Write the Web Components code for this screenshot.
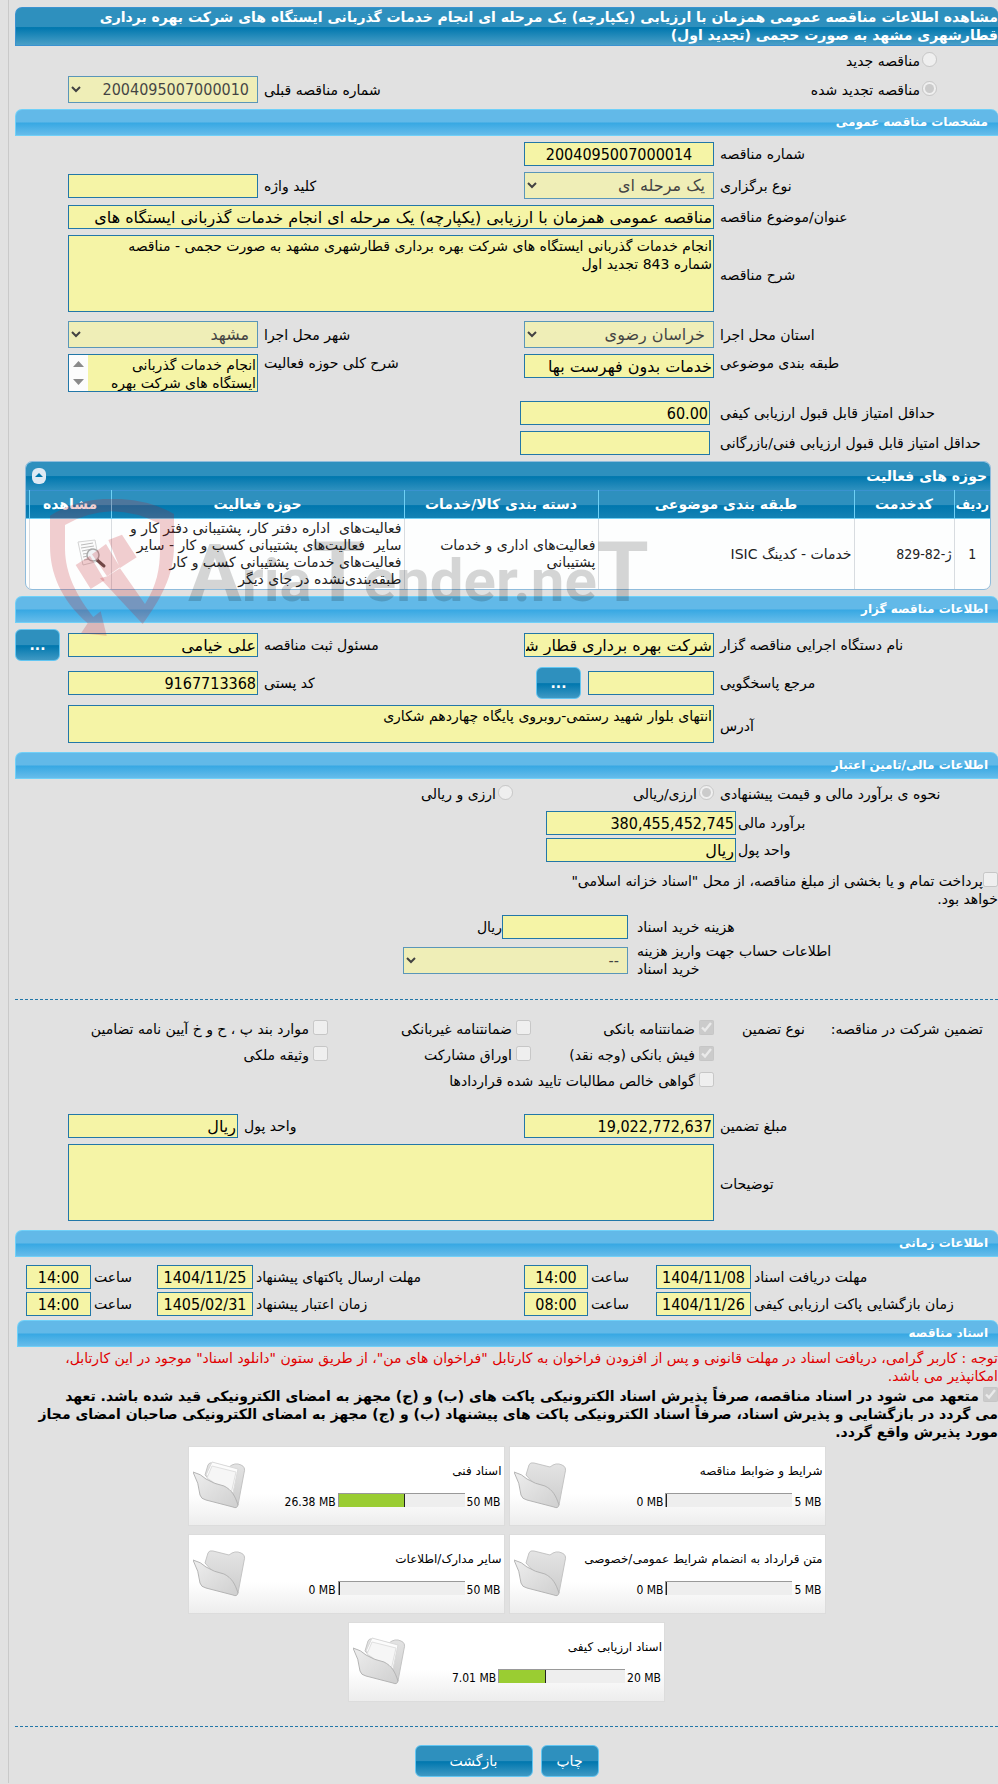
<!DOCTYPE html>
<html lang="fa" dir="rtl">
<head>
<meta charset="utf-8">
<title>مشاهده اطلاعات مناقصه عمومی</title>
<style>
  body {
    margin: 0;
    padding: 7px 0 6px 15px;
    background: linear-gradient(#c9c9c9, #c9c9c9) 8px 0 / 1px 100% no-repeat #e1e1e1;
    color: #000;
    font: 14px/18px "DejaVu Sans", sans-serif;
    overflow-x: hidden;
  }
</style>
</head>
<body>
<tender-page></tender-page>

<script>
class PageTitle extends HTMLElement {
  constructor() {
    super();
    this.attachShadow({ mode: 'open' });
    this.shadowRoot.innerHTML = `
      <style>
        :host { display: block; }
        h1 {
          margin: 0;
          padding: 0 0 1px;
          border: 1px solid #3a92d0;
          border-right: 0;
          border-radius: 7px 7px 0 0;
          background: linear-gradient(#2e90be 0 50%, #0077ae 53%, #4a9fc7);
          color: #fff;
          font-size: 14px;
          line-height: 18px;
        }
      </style>
      <h1><slot></slot></h1>
    `;
  }
}

class SectionBar extends HTMLElement {
  constructor() {
    super();
    this.attachShadow({ mode: 'open' });
    this.shadowRoot.innerHTML = `
      <style>
        :host { display: block; }
        h2 {
          margin: 0;
          padding: 0 10px;
          border: 1px solid #70d0f8;
          border-right: 0;
          border-radius: 7px 7px 0 0;
          background: linear-gradient(#62b9e8 0 48%, #37a8e3 52%, #66bcea);
          color: #fff;
          font-size: 12px;
          line-height: 25px;
        }
      </style>
      <h2><slot></slot></h2>
    `;
  }
}

// One line of the form. The fields inside hand their label and control to this grid.
class FormRow extends HTMLElement {
  constructor() {
    super();
    this.attachShadow({ mode: 'open' });
    this.shadowRoot.innerHTML = `
      <style>
        :host {
          display: grid;
          grid-template-columns: 278px 190px 1fr 190px 47px;
          column-gap: 6px;
          align-items: center;
        }
        :host([top]) { align-items: start; }
        :host([layout="estimate"]) {
          grid-template-columns: 260px 190px;
          column-gap: 2px;
        }
        :host([layout="amount"]) {
          grid-template-columns: 278px 190px 1fr 170px 47px;
        }
        :host([layout="fee"]) {
          grid-template-columns: 213px 225px;
          column-gap: 9px;
          padding-right: 148px;
        }
        :host([layout="time"]) {
          grid-template-columns: 244px 95px 62px 64px 1fr 96px 60px 65px;
          column-gap: 3px;
          padding-left: 11px;
        }
        ::slotted(tender-button) { justify-self: end; }
      </style>
      <slot></slot>
    `;
  }
}

class TenderField extends HTMLElement {
  connectedCallback() {
    const kind = this.getAttribute('kind') || 'input';
    const value = this.getAttribute('value') || '';
    this.attachShadow({ mode: 'open' });
    this.shadowRoot.innerHTML = `
      <style>
        :host { display: contents; }
        label { text-align: left; }
        .control {
          display: flex;
          align-items: center;
          gap: 7px;
          min-width: 0;
        }
        :host([inset]) .control { margin-right: 4px; margin-left: -4px; }
        :host([short]) .control { gap: 0; }
        :host([wide]) .control { grid-column: span 3; }
        :host([kind="textarea"]) .control { margin-bottom: 3px; }
        input, select, textarea {
          box-sizing: border-box;
          flex: 1;
          min-width: 0;
          height: 24px;
          margin: 0;
          padding: 1px;
          border: 1px solid #2277a8;
          border-radius: 0;
          outline: 0;
          background-color: #f5f4a6;
          color: #000;
          font-family: inherit;
          font-size: 16px;
        }
        .digits { font-family: "DejaVu Sans Condensed", "DejaVu Sans", sans-serif; }
        select { height: 27px; padding: 0 4px; }
        textarea {
          height: 38px;
          font-size: 14px;
          line-height: 18px;
          resize: none;
          overflow: hidden;
        }
        :host([tall]) textarea { height: 77px; }
        :host([center]) input { text-align: center; }
        :host([short]) input, :host([after]) input { flex: 0 0 126px; }
        :host([scroll]) .control { border: 1px solid #2277a8; gap: 0; box-sizing: border-box; }
        :host([scroll]) textarea { border: 0; height: 36px; }
        .scroll {
          display: flex;
          flex-direction: column;
          justify-content: space-between;
          box-sizing: border-box;
          width: 19px;
          height: 36px;
          padding: 6px 4px;
          background: #fcfcfc;
        }
        .scroll svg { display: block; width: 11px; height: 6px; fill: #8a8a8a; }
      </style>
      <label for="control"></label>
      <div class="control"></div>
    `;
    this.shadowRoot.querySelector('label').textContent = this.getAttribute('label');
    const box = this.shadowRoot.querySelector('.control');
    const control = document.createElement(kind);
    control.id = 'control';
    if (/^[\d.,:\/-]+$/.test(value)) {
      control.className = 'digits';
    }
    if (kind === 'select') {
      control.add(new Option(value));
      control.disabled = true;
    } else {
      control.value = value;
      control.readOnly = true;
    }
    box.appendChild(control);
    if (this.hasAttribute('scroll')) {
      box.insertAdjacentHTML('beforeend', `
        <span class="scroll">
          <svg viewBox="0 0 11 6"><path d="M0 6 5.500 0 11 6z"/></svg>
          <svg viewBox="0 0 11 6"><path d="M0 0 5.500 6 11 0z"/></svg>
        </span>`);
    }
    box.appendChild(document.createElement('slot'));
  }
}

class TenderChoice extends HTMLElement {
  connectedCallback() {
    this.attachShadow({ mode: 'open' });
    this.shadowRoot.innerHTML = `
      <style>
        :host { display: block; }
        input {
          width: 15px;
          height: 15px;
          margin: 0;
          vertical-align: -1px;
        }
        :host([gap]) input { margin-left: 4px; }
        :host([radio]) input { margin-left: 2px; }
      </style>
      <input id="choice" type="${this.hasAttribute('radio') ? 'radio' : 'checkbox'}" disabled><label for="choice"><slot></slot></label>
    `;
    this.shadowRoot.querySelector('input').checked = this.hasAttribute('checked');
  }
}

class TenderButton extends HTMLElement {
  constructor() {
    super();
    this.attachShadow({ mode: 'open' });
    this.shadowRoot.innerHTML = `
      <style>
        :host { display: block; }
        button {
          display: block;
          box-sizing: border-box;
          width: var(--button-width, 45px);
          height: 32px;
          padding: 0;
          border: 1px solid #63c6f2;
          border-radius: 6px;
          background: linear-gradient(#2e90be 0 50%, #0077ae 52%, #3f99c4);
          color: #fff;
          font: inherit;
          cursor: pointer;
        }
        :host([dots]) button { font-weight: bold; }
      </style>
      <button type="button"><slot></slot></button>
    `;
  }
}

class ActivityTable extends HTMLElement {
  constructor() {
    super();
    this.attachShadow({ mode: 'open' });
    this.shadowRoot.innerHTML = `
      <style>
        :host { display: block; margin: 0 7px 0 10px; }
        .panel {
          border: 1px solid #8fbcdc;
          border-radius: 7px;
          overflow: hidden;
          background: #fdfefe;
        }
        header {
          display: flex;
          align-items: center;
          justify-content: space-between;
          height: 28px;
          padding: 0 3px 0 5px;
          background: linear-gradient(#2e90be 0 50%, #0077ae 52%, #2e90be);
          color: #fff;
        }
        h3 { margin: 0; font-size: 14px; }
        .toggle { display: block; width: 16px; height: 16px; padding: 0; border: 0; background: none; }
        table {
          width: 100%;
          border-collapse: collapse;
          table-layout: fixed;
          line-height: 17px;
          color: #222;
        }
        thead tr { background: linear-gradient(#2e90be 0 50%, #0077ae 52%, #1583b5); }
        th {
          height: 27px;
          padding: 0;
          border-left: 1px solid #6fd0f5;
          border-top: 1px solid #3a92d0;
          border-bottom: 1px solid #6fd0f5;
          color: #fff;
          font-size: 14px;
        }
        td {
          height: 70px;
          padding: 0 2px;
          border-left: 1px solid #d8dce0;
          font-size: 14px;
          text-align: right;
        }
        th:last-child, td:last-child { border-left: 0; padding: 0; }
        th.index { font-family: "DejaVu Sans Condensed", "DejaVu Sans", sans-serif; }
        td.middle { text-align: center; }
        .digits { font-family: "DejaVu Sans Condensed", "DejaVu Sans", sans-serif; }
        .view { display: block; width: 32px; height: 32px; margin: 0 2px; padding: 0; border: 0; background: none; }
      </style>
      <div class="panel">
        <header>
          <h3>حوزه های فعالیت</h3>
          <button class="toggle" type="button" aria-label="جمع کردن">
            <svg width="16" height="16" viewBox="0 0 16 16"><rect x="1" y="0" width="14" height="16" rx="6" fill="#dfeaf4"/><path d="M4 9 8 5l4 4z" fill="#0077ae"/></svg>
          </button>
        </header>
        <table>
          <colgroup>
            <col style="width: 36px"><col style="width: 100px"><col><col style="width: 194px">
            <col style="width: 293px"><col style="width: 82px"><col style="width: 3px">
          </colgroup>
          <thead>
            <tr><th class="index">ردیف</th><th>کدخدمت</th><th>طبقه بندی موضوعی</th><th>دسته بندی کالا/خدمات</th><th>حوزه فعالیت</th><th>مشاهده</th><th></th></tr>
          </thead>
          <tbody>
            <tr>
              <td class="middle digits">1</td>
              <td class="digits">ژ-82-829</td>
              <td>خدمات - کدینگ ISIC</td>
              <td>فعالیت‌های اداری و خدمات<br>پشتیبانی</td>
              <td>فعالیت‌های&nbsp; اداره دفتر کار، پشتیبانی دفتر کار و<br>سایر&nbsp; فعالیت‌های پشتیبانی کسب و کار - سایر<br>فعالیت‌های خدمات پشتیبانی کسب و کار<br>طبقه‌بندی‌نشده در جای دیگر</td>
              <td>
                <button class="view" type="button" aria-label="مشاهده">
                  <svg width="32" height="32" viewBox="0 0 32 32">
                    <path d="M3 4 20 2l4 21L8 27z" fill="#fbfbfb" stroke="#d4d4d4"/>
                    <path d="m6 7 12-2M6 10l13-2M7 13l10-2M8 16l6-1M8 19l5-1M9 22l6-1" stroke="#bbb"/>
                    <path d="m22 22 7 6" stroke="#5c5450" stroke-width="3" stroke-linecap="round"/>
                    <circle cx="18" cy="17" r="6" fill="#eef1f4" fill-opacity=".8" stroke="#aaa" stroke-width="1.500"/>
                  </svg>
                </button>
              </td>
              <td></td>
            </tr>
          </tbody>
        </table>
      </div>
    `;
  }
}

// Site mark laid over the table and the bar under it.
class WaterMark extends HTMLElement {
  constructor() {
    super();
    this.attachShadow({ mode: 'open' });
    this.shadowRoot.innerHTML = `
      <style>
        :host {
          position: absolute;
          top: 38px;
          left: 35px;
          z-index: 1;
          pointer-events: none;
        }
        svg { display: block; }
      </style>
      <svg width="620" height="142" viewBox="0 0 620 142" direction="ltr">
        <g fill="#c01820" fill-opacity=".21" transform="translate(-10 -10) scale(.33333)">
          <path d="M30 80Q110 30 215 29Q325 30 402 75V170C402 260 362 330 308 405L180 268 202 262 240 238 315 345C350 290 360 240 360 180V105Q290 68 215 67Q140 70 75 108V180C76 255 110 320 160 384L182 367 200 440 123 433 143 403C60 330 30 250 30 170Z"/>
          <path d="M205 153 246 137 290 205 240 237ZM107 228 150 200 194 274 152 300ZM156 196 198 165 240 235 201 262Z"/>
        </g>
        <g fill="#000" fill-opacity=".16" font-family="Roboto, sans-serif" font-weight="bold" font-size="60">
          <text x="138" y="102"><tspan font-size="80">A</tspan>ria<tspan font-size="84">T</tspan>ender.ne<tspan font-size="84">T</tspan></text>
        </g>
      </svg>
    `;
  }
}

class DocumentCard extends HTMLElement {
  connectedCallback() {
    const papers = this.hasAttribute('papers')
      ? '<path d="m13 16 6-13 26 7-5 24z" fill="#fcfcfc" stroke="#dadada"/><path d="m14 19 5-12 24 6-5 22z" fill="#f6f6f6" stroke="#e0e0e0"/>'
      : '';
    this.attachShadow({ mode: 'open' });
    this.shadowRoot.innerHTML = `
      <style>
        :host {
          display: flex;
          direction: ltr;
          align-items: center;
          box-sizing: border-box;
          width: 317px;
          height: 80px;
          padding: 0 2px 0 4px;
          border: 1px solid #dcdcdc;
          background: linear-gradient(#fff 60%, #ededed);
          font-size: 12px;
        }
        .body { flex: 1; display: flex; flex-direction: column; gap: 13px; }
        .title { direction: rtl; text-align: right; }
        .usage {
          display: flex;
          justify-content: flex-end;
          gap: 2px;
          padding-right: 1px;
          font-family: "DejaVu Sans Condensed", "DejaVu Sans", sans-serif;
        }
        .limit { min-width: 27px; }
        .track {
          box-sizing: border-box;
          width: 127px;
          height: 14px;
          border-top: 1px solid #999;
          border-left: 1px solid #999;
          background: #eee;
        }
        .fill { box-sizing: border-box; height: 13px; border-right: 1px solid #222; background: #9acd32; }
      </style>
      <svg width="54" height="54" viewBox="0 0 54 54">
        <defs>
          <linearGradient id="back" x2="0" y2="1"><stop stop-color="#e4e4e4"/><stop offset="1" stop-color="#cdcdcd"/></linearGradient>
          <linearGradient id="front" x2="1" y2="1"><stop stop-color="#eee"/><stop offset="1" stop-color="#cfcfcf"/></linearGradient>
        </defs>
        <path d="M12 16 15 6Q16 3 20 4L36 8Q42 3 48 6 53 8 51 14L45 46 39 46z" fill="url(#back)" stroke="#c4c4c4"/>
        ${papers}
        <path d="M0 13Q8 15 13 20 21 25 31 27C39 31 42 37 45 46Q44 50 40 48L13 41Q8 40 7 36 6 24 0 13z" fill="url(#front)" stroke="#b4b4b4"/>
      </svg>
      <div class="body">
        <div class="title">${this.getAttribute('name')}</div>
        <div class="usage">
          <span>${this.getAttribute('used')} MB</span>
          <div class="track"><div class="fill" style="width: ${this.getAttribute('share')}%"></div></div>
          <span class="limit">${this.getAttribute('limit')} MB</span>
        </div>
      </div>
    `;
  }
}

class TenderPage extends HTMLElement {
  constructor() {
    super();
    this.attachShadow({ mode: 'open' });
    this.shadowRoot.innerHTML = `
      <style>
        :host { display: block; }
        .rows { display: flex; flex-direction: column; gap: 6px; padding: 6px 0; }
        .tight { display: flex; flex-direction: column; gap: 3px; }
        .times { display: flex; flex-direction: column; gap: 3px; padding: 8px 0 4px; }
        .kind { padding-right: 61px; }
        .kind-cell { grid-column: span 2; padding-right: 61px; }
        .marked { position: relative; }
        .pricing { display: grid; grid-template-columns: 278px 195px 1fr; column-gap: 6px; padding-bottom: 2px; }
        .pricing span { text-align: left; }
        .treasury { padding: 4px 0 1px; }
        hr { margin: 0; border: 0; border-top: 1px dashed #2277a8; }
        .split { margin-top: 15px; }
        .guarantee {
          display: grid;
          grid-template-columns: 178px 91px 183px 203px 1fr;
          row-gap: 8px;
          padding: 20px 15px 18px 0;
        }
        .guarantee .first { grid-column: 3; }
        .guarantee .long { grid-column: 3 / span 3; }
        .documents { padding-left: 2px; }
        .notice { margin: 2px 0; color: #e00000; }
        .pledge { font-weight: bold; }
        .cards { display: flex; flex-wrap: wrap; justify-content: center; gap: 8px 4px; max-width: 640px; margin: 0 auto; padding: 5px 0 24px; }
        .actions { display: flex; justify-content: center; gap: 8px; padding-top: 18px; }
        .back { --button-width: 118px; }
        .print { --button-width: 58px; }
      </style>

      <page-title>مشاهده اطلاعات مناقصه عمومی همزمان با ارزیابی (یکپارچه) یک مرحله ای انجام خدمات گذربانی ایستگاه های شرکت بهره برداری<br>قطارشهری مشهد به صورت حجمی (تجدید اول)</page-title>
      <div class="rows">
        <tender-choice class="kind" radio>مناقصه جدید</tender-choice>
        <form-row>
          <tender-choice class="kind-cell" radio checked>مناقصه تجدید شده</tender-choice>
          <tender-field kind="select" label="شماره مناقصه قبلی" value="2004095007000010"></tender-field>
        </form-row>
      </div>

      <section-bar>مشخصات مناقصه عمومی</section-bar>
      <div class="rows">
        <form-row><tender-field center label="شماره مناقصه" value="2004095007000014"></tender-field></form-row>
        <form-row>
          <tender-field kind="select" label="نوع برگزاری" value="یک مرحله ای"></tender-field>
          <tender-field label="کلید واژه"></tender-field>
        </form-row>
        <form-row><tender-field wide label="عنوان/موضوع مناقصه" value="مناقصه عمومی همزمان با ارزیابی (یکپارچه) یک مرحله ای انجام خدمات گذربانی ایستگاه های"></tender-field></form-row>
        <form-row><tender-field kind="textarea" wide tall label="شرح مناقصه" value="انجام خدمات گذربانی ایستگاه های شرکت بهره برداری قطارشهری مشهد به صورت حجمی - مناقصه&#10;شماره 843 تجدید اول"></tender-field></form-row>
        <form-row>
          <tender-field kind="select" label="استان محل اجرا" value="خراسان رضوی"></tender-field>
          <tender-field kind="select" label="شهر محل اجرا" value="مشهد"></tender-field>
        </form-row>
        <form-row top>
          <tender-field label="طبقه بندی موضوعی" value="خدمات بدون فهرست بها"></tender-field>
          <tender-field kind="textarea" scroll label="شرح کلی حوزه فعالیت" value="انجام خدمات گذربانی ایستگاه های شرکت بهره برداری"></tender-field>
        </form-row>
        <form-row><tender-field inset label="حداقل امتیاز قابل قبول ارزیابی کیفی" value="60.00"></tender-field></form-row>
        <form-row><tender-field inset label="حداقل امتیاز قابل قبول ارزیابی فنی/بازرگانی"></tender-field></form-row>
        <div class="marked">
          <activity-table></activity-table>
          <water-mark></water-mark>
        </div>
      </div>

      <section-bar>اطلاعات مناقصه گزار</section-bar>
      <div class="rows">
        <form-row>
          <tender-field label="نام دستگاه اجرایی مناقصه گزار" value="شرکت بهره برداری قطار شهری مشهد"></tender-field>
          <tender-field label="مسئول ثبت مناقصه" value="علی خیامی"></tender-field>
          <tender-button dots>...</tender-button>
        </form-row>
        <form-row>
          <tender-field after label="مرجع پاسخگویی"><tender-button dots>...</tender-button></tender-field>
          <tender-field label="کد پستی" value="9167713368"></tender-field>
        </form-row>
        <form-row><tender-field kind="textarea" wide label="آدرس" value="انتهای بلوار شهید رستمی-روبروی پایگاه چهاردهم شکاری"></tender-field></form-row>
      </div>

      <section-bar>اطلاعات مالی/تامین اعتبار</section-bar>
      <div class="rows">
        <div class="pricing">
          <span>نحوه ی برآورد مالی و قیمت پیشنهادی</span>
          <tender-choice radio checked>ارزی/ریالی</tender-choice>
          <tender-choice radio>ارزی و ریالی</tender-choice>
        </div>
        <div class="tight">
          <form-row layout="estimate"><tender-field label="برآورد مالی" value="380,455,452,745"></tender-field></form-row>
          <form-row layout="estimate"><tender-field label="واحد پول" value="ریال"></tender-field></form-row>
        </div>
        <tender-choice class="treasury">پرداخت تمام و یا بخشی از مبلغ مناقصه، از محل "اسناد خزانه اسلامی"<br>خواهد بود.</tender-choice>
        <div class="tight">
          <form-row layout="fee"><tender-field short label="هزینه خرید اسناد">ریال</tender-field></form-row>
          <form-row layout="fee"><tender-field kind="select" label="اطلاعات حساب جهت واریز هزینه خرید اسناد" value="--"></tender-field></form-row>
        </div>
      </div>
      <hr class="split">
      <div class="guarantee">
        <span>تضمین شرکت در مناقصه:</span>
        <span>نوع تضمین</span>
        <tender-choice gap checked>ضمانتنامه بانکی</tender-choice>
        <tender-choice gap>ضمانتنامه غیربانکی</tender-choice>
        <tender-choice gap>موارد بند پ ، ح و خ آیین نامه تضامین</tender-choice>
        <tender-choice class="first" gap checked>فیش بانکی (وجه نقد)</tender-choice>
        <tender-choice gap>اوراق مشارکت</tender-choice>
        <tender-choice gap>وثیقه ملکی</tender-choice>
        <tender-choice class="long" gap>گواهی خالص مطالبات تایید شده قراردادها</tender-choice>
      </div>
      <div class="rows">
        <form-row layout="amount">
          <tender-field label="مبلغ تضمین" value="19,022,772,637"></tender-field>
          <tender-field label="واحد پول" value="ریال"></tender-field>
        </form-row>
        <form-row><tender-field kind="textarea" wide tall label="توضیحات"></tender-field></form-row>
      </div>

      <section-bar>اطلاعات زمانی</section-bar>
      <div class="times">
        <form-row layout="time">
          <tender-field center label="مهلت دریافت اسناد" value="1404/11/08"></tender-field>
          <tender-field center label="ساعت" value="14:00"></tender-field>
          <tender-field center label="مهلت ارسال پاکتهای پیشنهاد" value="1404/11/25"></tender-field>
          <tender-field center label="ساعت" value="14:00"></tender-field>
        </form-row>
        <form-row layout="time">
          <tender-field center label="زمان بازگشایی پاکت ارزیابی کیفی" value="1404/11/26"></tender-field>
          <tender-field center label="ساعت" value="08:00"></tender-field>
          <tender-field center label="زمان اعتبار پیشنهاد" value="1405/02/31"></tender-field>
          <tender-field center label="ساعت" value="14:00"></tender-field>
        </form-row>
      </div>

      <div class="documents">
        <section-bar>اسناد مناقصه</section-bar>
        <p class="notice">توجه : کاربر گرامی، دریافت اسناد در مهلت قانونی و پس از افزودن فراخوان به کارتابل "فراخوان های من"، از طریق ستون "دانلود اسناد" موجود در این کارتابل،<br>امکانپذیر می باشد.</p>
        <tender-choice class="pledge" gap checked>متعهد می شود در اسناد مناقصه، صرفاً پذیرش اسناد الکترونیکی پاکت های (ب) و (ج) مجهز به امضای الکترونیکی قید شده باشد. تعهد<br>می گردد در بازگشایی و پذیرش اسناد، صرفاً اسناد الکترونیکی پاکت های پیشنهاد (ب) و (ج) مجهز به امضای الکترونیکی صاحبان امضای مجاز<br>مورد پذیرش واقع گردد.</tender-choice>
      </div>
      <div class="cards">
        <document-card name="شرایط و ضوابط مناقصه" used="0" limit="5" share="0"></document-card>
        <document-card papers name="اسناد فنی" used="26.38" limit="50" share="53"></document-card>
        <document-card name="متن قرارداد به انضمام شرایط عمومی/خصوصی" used="0" limit="5" share="0"></document-card>
        <document-card name="سایر مدارک/اطلاعات" used="0" limit="50" share="0"></document-card>
        <document-card papers name="اسناد ارزیابی کیفی" used="7.01" limit="20" share="37"></document-card>
      </div>
      <hr>
      <div class="actions">
        <tender-button class="print">چاپ</tender-button>
        <tender-button class="back">بازگشت</tender-button>
      </div>
    `;
  }
}

customElements.define('page-title', PageTitle);
customElements.define('section-bar', SectionBar);
customElements.define('form-row', FormRow);
customElements.define('tender-field', TenderField);
customElements.define('tender-choice', TenderChoice);
customElements.define('tender-button', TenderButton);
customElements.define('activity-table', ActivityTable);
customElements.define('water-mark', WaterMark);
customElements.define('document-card', DocumentCard);
customElements.define('tender-page', TenderPage);
</script>
</body>
</html>
